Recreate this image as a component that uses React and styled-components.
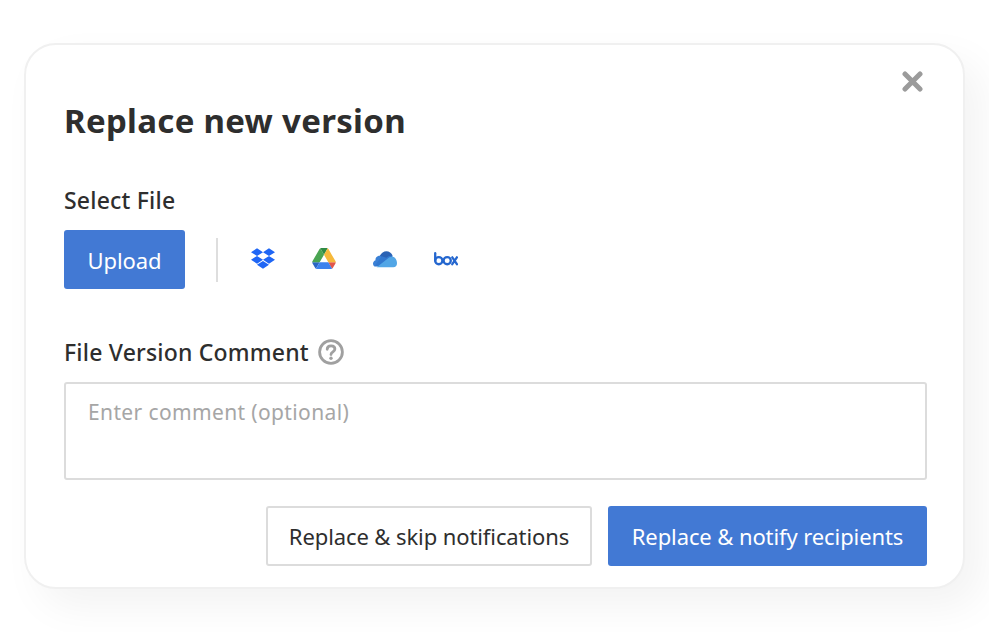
import styled, { createGlobalStyle } from "styled-components";
import { FaDropbox } from "react-icons/fa";

const GlobalStyle = createGlobalStyle`
    html, body {
        margin: 0;
        background: #fff;
    }
    body {
        font-family: "Noto Sans", "Open Sans", sans-serif;
        color: #2e2e2e;
    }
`;

const Page = styled.div`
    width: 989px;
    height: 632px;
    padding: 43px 24px 0 24px;
    box-sizing: border-box;
    overflow: hidden;
`;

const Card = styled.div`
    position: relative;
    box-sizing: border-box;
    width: 941px;
    height: 546px;
    padding: 52px 36px 0 38px;
    background: #fff;
    border: 2px solid #f0f0f0;
    border-radius: 32px;
    box-shadow: 16px 18px 40px rgba(0, 0, 0, 0.05);
`;

const CloseButton = styled.button`
    position: absolute;
    top: 24px;
    right: 39px;
    width: 24px;
    height: 24px;
    padding: 0;
    border: 0;
    background: none;
    display: flex;
    align-items: center;
    justify-content: center;
`;

const Title = styled.h1`
    margin: 0;
    font-size: 33px;
    line-height: 48px;
    font-weight: 700;
    color: #2e2e2e;
    letter-spacing: 0.3px;
`;

const Label = styled.label`
    display: flex;
    align-items: center;
    gap: 9px;
    font-size: 23px;
    line-height: 30px;
    font-weight: 550;
    letter-spacing: 0.2px;
    color: #2e2e2e;
`;

const SelectSection = styled.div`
    margin-top: 40px;
`;

const SourceRow = styled.div`
    display: flex;
    align-items: center;
    margin-top: 15px;
`;

const Button = styled.button`
    box-sizing: border-box;
    height: ${(props) => props.height}px;
    padding: 0;
    width: ${(props) => props.width}px;
    border-radius: 3px;
    font-family: inherit;
    font-size: 22px;
    letter-spacing: -0.1px;
    background: ${(props) => (props.outline ? "#fff" : "#4279d4")};
    color: ${(props) => (props.outline ? "#2e2e2e" : "#fff")};
    border: ${(props) => (props.outline ? "2px solid #dcdcdc" : "0")};
`;

const Divider = styled.div`
    width: 2px;
    height: 44px;
    margin: 0 33px 0 31px;
    background: #dedede;
`;

const Sources = styled.div`
    display: flex;
    align-items: center;
    gap: 37px;
    margin-bottom: 2px;
`;

const SourceIcon = styled.div`
    width: 24px;
    height: 24px;
    display: flex;
    align-items: center;
    justify-content: center;
    color: #1f66f5;
`;

const CommentSection = styled.div`
    margin-top: 48px;
`;

const CommentBox = styled.textarea`
    display: block;
    box-sizing: border-box;
    width: 863px;
    height: 98px;
    margin-top: 15px;
    padding: 13px 22px;
    border: 2px solid #dcdcdc;
    border-radius: 3px;
    resize: none;
    outline: none;
    font-family: inherit;
    font-size: 21px;
    line-height: 30px;
    letter-spacing: 0.37px;

    &::placeholder {
        color: #a6a6a6;
        opacity: 1;
    }
`;

const Footer = styled.div`
    display: flex;
    justify-content: flex-end;
    gap: 16px;
    width: 863px;
    margin-top: 26px;
`;

function DriveIcon() {
    return (
        <svg width="24" height="21" viewBox="0 0 87.3 78">
            <path d="M6.6 66.85l3.85 6.65c.8 1.4 1.95 2.5 3.3 3.3L27.5 53H0c0 1.55.4 3.1 1.2 4.5z" fill="#2a66c4" />
            <path d="M43.65 25L29.9 1.2c-1.35.8-2.5 1.9-3.3 3.3L1.2 48.5C.4 49.9 0 51.45 0 53h27.5z" fill="#4aa552" />
            <path d="M73.55 76.8c1.35-.8 2.5-1.9 3.3-3.3l1.6-2.75 7.65-13.25c.8-1.4 1.2-2.95 1.2-4.5H59.8l5.85 11.5z" fill="#e2564a" />
            <path d="M43.65 25L57.4 1.2C56.05.4 54.5 0 52.9 0H34.4c-1.6 0-3.15.45-4.5 1.2z" fill="#2f8a45" />
            <path d="M59.8 53H27.5L13.75 76.8c1.35.8 2.9 1.2 4.5 1.2h50.8c1.6 0 3.15-.45 4.5-1.2z" fill="#3d82ee" />
            <path d="M73.4 26.5L60.7 4.5c-.8-1.4-1.95-2.5-3.3-3.3L43.65 25 59.8 53h27.45c0-1.55-.4-3.1-1.2-4.5z" fill="#f6b93b" />
        </svg>
    );
}

function OneDriveIcon() {
    return (
        <svg width="26" height="18" viewBox="0 0 26 18">
            <path d="M7 6.500C8.500 2.500 11.500 0.500 14.500 0.500c3 0 5.500 1.800 6.700 4.700L14 11z" fill="#2a62b4" />
            <path d="M7.500 5.500C3.800 5.500 2.300 8.500 2.800 10.300 0.900 11 0 12.500 0 14c0 1.200.5 2.200 1.300 2.900L15 9.500z" fill="#3a80d6" />
            <path d="M21.200 5.600c-2.500-.6-5 .1-6.800 2L9.500 6l-8.200 11h19z" fill="#3278cf" />
            <path d="M21.500 6.500c-2.300-.3-4.300.5-5.800 2.100L4 18h18c2.300 0 4-1.800 4-4.500 0-3.400-1.800-6.500-4.500-7z" fill="#52a6e6" />
        </svg>
    );
}

function BoxIcon() {
    return (
        <svg width="26" height="14" viewBox="0 0 26 14" fill="none" stroke="#2567cf" strokeWidth="2.500">
            <path d="M1.300 0.800V8.800" strokeLinecap="round" />
            <circle cx="5.200" cy="8.800" r="3.900" />
            <circle cx="14.300" cy="8.800" r="3.900" />
            <path d="M19.800 5.200l5 7.400M24.800 5.200l-5 7.400" strokeLinecap="round" />
        </svg>
    );
}

function HelpIcon() {
    return (
        <svg width="26" height="26" viewBox="0 0 26 26" fill="none" stroke="#a0a0a0" strokeWidth="2.800">
            <circle cx="13" cy="13" r="11.400" />
            <path d="M9.200 10.300c0-2.200 1.700-3.500 3.900-3.500s3.800 1.300 3.800 3.200c0 2.900-3.900 2.800-3.900 5.600" strokeLinecap="round" />
            <circle cx="13" cy="19.300" r="1.700" fill="#a0a0a0" stroke="none" />
        </svg>
    );
}

function App() {
    return (
        <>
            <GlobalStyle />
            <Page>
                <Card>
                    <CloseButton aria-label="Close">
                        <svg width="21" height="21" viewBox="0 0 21 21">
                            <path d="M3 3L18 18M18 3L3 18" stroke="#9b9b9b" strokeWidth="5" strokeLinecap="round" />
                        </svg>
                    </CloseButton>
                    <Title>Replace new version</Title>
                    <SelectSection>
                        <Label>Select File</Label>
                        <SourceRow>
                            <Button width={121} height={59}>Upload</Button>
                            <Divider />
                            <Sources>
                                <SourceIcon><FaDropbox size={25} /></SourceIcon>
                                <SourceIcon><DriveIcon /></SourceIcon>
                                <SourceIcon><OneDriveIcon /></SourceIcon>
                                <SourceIcon><BoxIcon /></SourceIcon>
                            </Sources>
                        </SourceRow>
                    </SelectSection>
                    <CommentSection>
                        <Label>File Version Comment <HelpIcon /></Label>
                        <CommentBox placeholder="Enter comment (optional)" />
                    </CommentSection>
                    <Footer>
                        <Button outline width={326} height={60}>Replace &amp; skip notifications</Button>
                        <Button width={319} height={60}>Replace &amp; notify recipients</Button>
                    </Footer>
                </Card>
            </Page>
        </>
    );
}

export default App;
